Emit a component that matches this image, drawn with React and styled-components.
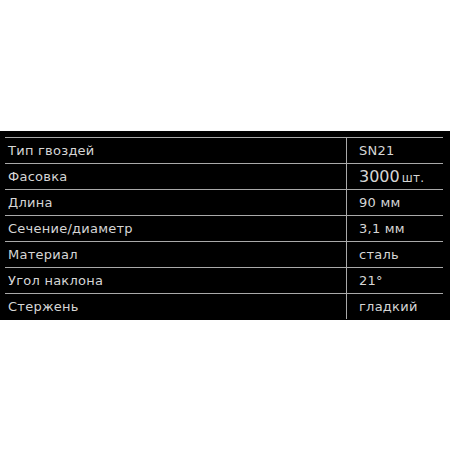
import React from "react"
import styled, { createGlobalStyle } from "styled-components"

const specs = [
  { label: "Тип гвоздей", value: "SN21" },
  { label: "Фасовка", value: "3000", unit: "шт." },
  { label: "Длина", value: "90 мм" },
  { label: "Сечение/диаметр", value: "3,1 мм" },
  { label: "Материал", value: "сталь" },
  { label: "Угол наклона", value: "21°" },
  { label: "Стержень", value: "гладкий" },
]

const GlobalStyle = createGlobalStyle`
  html, body {
    margin: 0;
    padding: 0;
    background: #fff;
  }
  body {
    font-family: "DejaVu Sans", "Noto Sans", sans-serif;
  }
`

const Page = styled.div`
  width: 450px;
  height: 450px;
  padding-top: 131px;
  box-sizing: border-box;
`

const Panel = styled.div`
  background: #000;
  height: 189px;
  padding: 6px 7px 0 5px;
  box-sizing: border-box;
`

const Table = styled.div`
  display: grid;
  grid-template-columns: 341px 1fr;
`

const Cell = styled.div`
  height: 26px;
  box-sizing: border-box;
  border-top: 1px solid #a9a9a9;
  display: flex;
  align-items: center;
  color: #d6d6d6;
  font-size: 13px;
  letter-spacing: 0.25px;
  padding-left: ${({ $value }) => ($value ? "12px" : "3px")};
  padding-bottom: 1px;
  border-left: ${({ $value }) => ($value ? "1px solid #a9a9a9" : "none")};
  white-space: nowrap;
`

const Big = styled.span`
  font-size: 16px;
  letter-spacing: 0;
`

const Unit = styled.span`
  font-size: 12px;
  margin-left: 2px;
  margin-top: 3px;
`

export default function App() {
  return (
    <Page>
      <GlobalStyle />
      <Panel>
        <Table>
          {specs.map((s) => (
            <React.Fragment key={s.label}>
              <Cell>{s.label}</Cell>
              <Cell $value>
                {s.unit ? (
                  <>
                    <Big>{s.value}</Big>
                    <Unit>{s.unit}</Unit>
                  </>
                ) : (
                  s.value
                )}
              </Cell>
            </React.Fragment>
          ))}
        </Table>
      </Panel>
    </Page>
  )
}
